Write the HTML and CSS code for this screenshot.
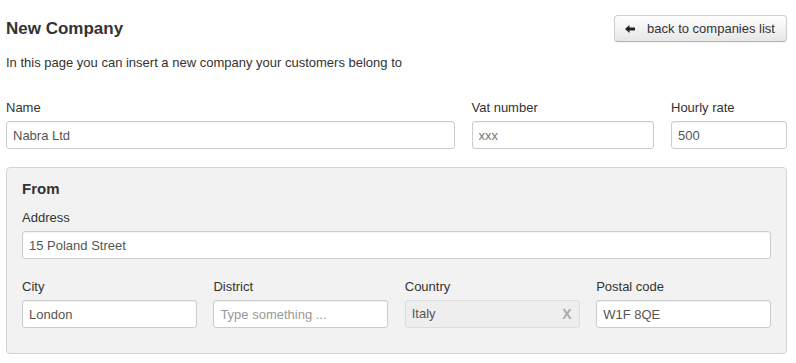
FILE: index.html
```html
<!DOCTYPE html>
<html lang="en">
<head>
    <meta charset="UTF-8">
    <title>New Company</title>
    <link rel="stylesheet" href="styles.css">
</head>
<body>
    <div class="page">
        <div class="page-header">
            <h2>New Company</h2>
            <button class="btn">
                <svg class="icon-arrow" width="10" height="8" viewBox="0 0 10 8">
                    <polygon points="0,4 4.5,0 4.5,2.5 10,2.5 10,5.5 4.5,5.5 4.5,8" fill="#222"/>
                </svg>
                back to companies list
            </button>
        </div>

        <p class="intro">In this page you can insert a new company your customers belong to</p>

        <div class="form-row">
            <div class="field span-7">
                <label>Name</label>
                <input type="text" value="Nabra Ltd">
            </div>
            <div class="field span-3">
                <label>Vat number</label>
                <input type="text" class="muted" value="xxx">
            </div>
            <div class="field span-2">
                <label>Hourly rate</label>
                <input type="text" value="500">
            </div>
        </div>

        <div class="well">
            <h4>From</h4>
            <div class="field">
                <label>Address</label>
                <input type="text" value="15 Poland Street">
            </div>
            <div class="address-row">
                <div class="field">
                    <label>City</label>
                    <input type="text" value="London">
                </div>
                <div class="field">
                    <label>District</label>
                    <input type="text" placeholder="Type something ...">
                </div>
                <div class="field">
                    <label>Country</label>
                    <div class="select-disabled">
                        <span>Italy</span>
                        <span class="clear">X</span>
                    </div>
                </div>
                <div class="field">
                    <label>Postal code</label>
                    <input type="text" value="W1F 8QE">
                </div>
            </div>
        </div>
    </div>
</body>
</html>
```

FILE: styles.css
```css
body {
    margin: 0;
    font-family: "Liberation Sans", Arial, sans-serif;
    font-size: 13px;
    line-height: 18px;
    color: #333;
    background-color: #fff;
}

.page {
    padding: 15px 9px 0 6px;
}

.page-header {
    display: flex;
    justify-content: space-between;
    align-items: center;
}

h2 {
    margin: 0;
    font-size: 17px;
    font-weight: bold;
    color: #333;
}

.btn {
    display: flex;
    align-items: center;
    gap: 12px;
    height: 27px;
    padding: 0 11px 0 10px;
    font-family: inherit;
    font-size: 13px;
    color: #333;
    background-color: #f5f5f5;
    background-image: linear-gradient(#ffffff, #e6e6e6);
    border: 1px solid #cfcfcf;
    border-bottom-color: #b3b3b3;
    border-radius: 4px;
    box-shadow: inset 0 1px 0 rgba(255, 255, 255, 0.2), 0 1px 2px rgba(0, 0, 0, 0.05);
    cursor: pointer;
}

.intro {
    margin: 12px 0 0 0;
}

.form-row {
    display: grid;
    grid-template-columns: repeat(12, 1fr);
    column-gap: 17px;
    margin-top: 27px;
}

.span-7 { grid-column: span 7; }
.span-3 { grid-column: span 3; }
.span-2 { grid-column: span 2; }

.field label {
    display: block;
    margin-bottom: 4px;
}

.field input,
.select-disabled {
    box-sizing: border-box;
    display: block;
    width: 100%;
    height: 28px;
    margin: 0;
    padding: 0 6px;
    font-family: inherit;
    font-size: 13px;
    color: #555;
    background-color: #fff;
    border: 1px solid #ccc;
    border-radius: 3px;
    box-shadow: inset 0 1px 1px rgba(0, 0, 0, 0.05);
}

.field input.muted {
    color: #777;
}

.field input::placeholder {
    color: #999;
}

.select-disabled {
    display: flex;
    align-items: center;
    justify-content: space-between;
    background-color: #eee;
    border-color: #ddd;
    box-shadow: none;
}

.select-disabled .clear {
    margin-right: 1px;
    font-weight: bold;
    font-size: 14px;
    color: #aaa;
}

.well {
    margin-top: 18px;
    padding: 12px 15px 25px 15px;
    background-color: #f2f2f2;
    border: 1px solid #d4d4d4;
    border-radius: 4px;
}

h4 {
    margin: 0 0 11px 0;
    font-size: 15px;
    font-weight: bold;
}

.address-row {
    display: grid;
    grid-template-columns: repeat(4, 1fr);
    column-gap: 16.5px;
    margin-top: 19px;
}
```
